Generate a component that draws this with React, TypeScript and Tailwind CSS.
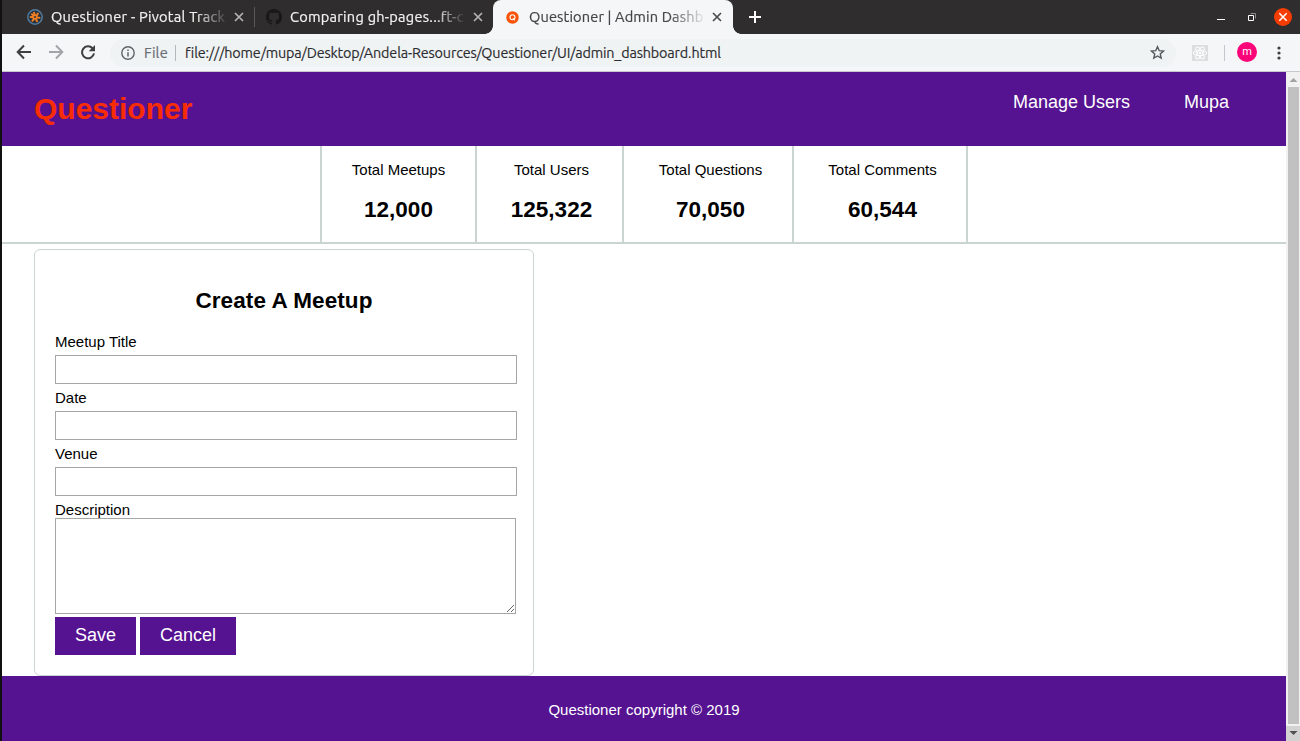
import type { ReactNode } from "react";

const uiFont = "font-['Ubuntu','Noto_Sans',sans-serif]";

function CloseMark({ className }: { className: string }) {
  return (
    <svg className={`h-[10px] w-[10px] shrink-0 ${className}`} viewBox="0 0 10 10" fill="none" stroke="currentColor" strokeWidth="1.7">
      <path d="M1 1l8 8M9 1L1 9" />
    </svg>
  );
}

function PivotalIcon() {
  return (
    <svg className="h-4 w-4 shrink-0" viewBox="0 0 16 16">
      <circle cx="8" cy="8" r="7.2" fill="#26313c" stroke="#517a9e" strokeWidth="1.5" />
      <g stroke="#ee7f22" strokeWidth="2" strokeLinecap="round">
        <path d="M8 6.3L7 3.7M9.5 7.1l1.4-2.5M9.7 8.6l2.8.1M8.6 9.8l1.5 2.4M7 9.6l-1.6 2.2M6.3 8.3l-2.7-.4M6.8 6.9L4.9 5.3" />
      </g>
      <circle cx="8" cy="8" r="2.4" fill="#ee7f22" />
      <circle cx="8" cy="8" r="1" fill="#26313c" />
    </svg>
  );
}

function GithubIcon() {
  return (
    <svg className="h-4 w-4 shrink-0" viewBox="0 0 16 16" fill="#191717">
      <path d="M8 0C3.58 0 0 3.58 0 8c0 3.54 2.29 6.53 5.47 7.59.4.07.55-.17.55-.38 0-.19-.01-.82-.01-1.49-2.01.37-2.53-.49-2.69-.94-.09-.23-.48-.94-.82-1.13-.28-.15-.68-.52-.01-.53.63-.01 1.08.58 1.23.82.72 1.21 1.87.87 2.33.66.07-.52.28-.87.51-1.07-1.78-.2-3.64-.89-3.64-3.95 0-.87.31-1.59.82-2.15-.08-.2-.36-1.02.08-2.12 0 0 .67-.21 2.2.82.64-.18 1.32-.27 2-.27s1.36.09 2 .27c1.53-1.04 2.2-.82 2.2-.82.44 1.1.16 1.92.08 2.12.51.56.82 1.27.82 2.15 0 3.07-1.87 3.75-3.65 3.95.29.25.54.73.54 1.48 0 1.07-.01 1.93-.01 2.2 0 .21.15.46.55.38A8.01 8.01 0 0 0 16 8c0-4.42-3.58-8-8-8z" />
    </svg>
  );
}

function QuestionerIcon() {
  return (
    <svg className="h-[13px] w-[13px] shrink-0" viewBox="0 0 13 13" fill="none">
      <circle cx="6.5" cy="6.5" r="6.2" fill="#fb5208" />
      <circle cx="6.5" cy="6.3" r="2.5" stroke="#fff" strokeWidth="1.1" />
      <path d="M6.8 7.4L8.8 9.4" stroke="#fff" strokeWidth="1.1" />
    </svg>
  );
}

function TabStrip() {
  return (
    <div className="flex h-[34px] bg-[#302d2e]">
      <div className="flex w-[252px] shrink-0 items-center pl-[25px]">
        <PivotalIcon />
        <span className="ml-2 w-[176px] shrink-0 whitespace-nowrap text-[14.6px] tracking-[0.25px] text-[#f2f1f0] [-webkit-text-stroke:0.2px] [mask-image:linear-gradient(to_right,black_145px,transparent_178px)]">
          Questioner - Pivotal Track
        </span>
        <CloseMark className="ml-[7px] text-[#b5b3b3]" />
      </div>
      <div className="flex w-[239px] shrink-0 items-center">
        <div className="h-5 w-px bg-[#5a5758]" />
        <div className="ml-[11px]">
          <GithubIcon />
        </div>
        <span className="ml-2 w-[178px] shrink-0 whitespace-nowrap text-[14.6px] tracking-[0.24px] text-[#f2f1f0] [-webkit-text-stroke:0.2px] [mask-image:linear-gradient(to_right,black_145px,transparent_176px)]">
          Comparing gh-pages...ft-c
        </span>
        <CloseMark className="ml-[5px] text-[#b5b3b3]" />
      </div>
      <div className="relative flex w-[240px] shrink-0 items-center rounded-t-lg bg-[#f5f6f8] pl-[13px]">
        <span className="absolute bottom-0 -left-2 h-2 w-2 bg-[radial-gradient(circle_at_0_0,transparent_7.5px,#f5f6f8_8px)]" />
        <span className="absolute -right-2 bottom-0 h-2 w-2 bg-[radial-gradient(circle_at_100%_0,transparent_7.5px,#f5f6f8_8px)]" />
        <QuestionerIcon />
        <span className="ml-[10px] w-[176px] shrink-0 whitespace-nowrap text-[14.6px] tracking-[0.13px] text-[#454446] [-webkit-text-stroke:0.2px] [mask-image:linear-gradient(to_right,black_140px,transparent_178px)]">
          Questioner | Admin Dashb
        </span>
        <CloseMark className="ml-[7px] text-[#4c4b4d]" />
      </div>
      <svg className="mt-[11px] ml-4 h-3 w-3" viewBox="0 0 12 12" stroke="#fff" strokeWidth="2">
        <path d="M6 0v12M0 6h12" />
      </svg>
      <div className="ml-auto flex items-center pr-2">
        <svg className="h-4 w-10" viewBox="0 0 40 16" fill="none">
          <path d="M0 10.5h8" stroke="#fff" />
          <path d="M33.5 4.5h5v5" stroke="#8d8a8b" />
          <path d="M31.5 6.5h5v5h-5z" stroke="#fff" />
        </svg>
        <svg className="ml-[17px] h-[18px] w-[18px]" viewBox="0 0 18 18">
          <circle cx="9" cy="9" r="9" fill="#f53c02" />
          <path d="M5.3 5.3l7.4 7.4M12.7 5.3l-7.4 7.4" stroke="#fff" strokeWidth="1.5" />
        </svg>
      </div>
    </div>
  );
}

function Toolbar() {
  return (
    <div className="flex h-[38px] items-center border-b border-[#c5c7cb] bg-[#f5f6f8]">
      <svg className="-mt-px ml-[14px] h-4 w-[80px] shrink-0" viewBox="0 0 80 16" fill="none" strokeWidth="2">
        <path d="M15 8H2M8 1.5L1.7 8 8 14.5" stroke="#3f3f42" />
        <path d="M33 8h13M40 1.5L46.3 8 40 14.5" stroke="#a3a4a7" />
        <path d="M76.5 4.2A6 6 0 1 0 78 9.4" stroke="#3f3f42" />
        <path d="M79 1v6.3h-6.3z" fill="#3f3f42" />
      </svg>
      <div className="ml-[14px] flex h-7 w-[1066px] items-center rounded-full bg-[#eff3f4] pr-[11px] pl-[11px]">
        <svg className="h-[14px] w-[14px] shrink-0" viewBox="0 0 14 14" fill="none" stroke="#5f6368">
          <circle cx="7" cy="7" r="6.2" strokeWidth="1.4" />
          <path d="M7 6.2v4.3M7 3.4v1.5" strokeWidth="1.5" />
        </svg>
        <span className="mt-px ml-[9px] w-[24px] text-[14.6px] tracking-[0.2px] text-[#6a6e73] [-webkit-text-stroke:0.2px]">File</span>
        <span className="ml-[7px] h-4 w-px bg-[#b4b7bb]" />
        <span className="mt-[2px] ml-[9px] text-[14.4px] tracking-[-0.17px] whitespace-nowrap text-[#2c2b2e] [-webkit-text-stroke:0.15px]">
          file:///home/mupa/Desktop/Andela-Resources/Questioner/UI/admin_dashboard.html
        </span>
        <svg className="ml-auto h-[15px] w-[15px]" viewBox="0 0 15 15" fill="none" stroke="#55585c" strokeWidth="1.4">
          <path d="M7.5 1.7l1.75 4 4.2.4-3.2 2.85.95 4.2-3.7-2.2-3.7 2.2.95-4.2L1.55 6.1l4.2-.4z" />
        </svg>
      </div>
      <svg className="ml-4 h-4 w-4" viewBox="0 0 16 16" fill="none">
        <path d="M0 0h16v16H0z" fill="#dcddde" />
        <g stroke="#fff">
          <ellipse cx="8" cy="8" rx="6.7" ry="2.6" />
          <ellipse cx="8" cy="8" rx="6.7" ry="2.6" transform="rotate(60 8 8)" />
          <ellipse cx="8" cy="8" rx="6.7" ry="2.6" transform="rotate(120 8 8)" />
        </g>
        <circle cx="8" cy="8" r="1.3" fill="#fff" />
      </svg>
      <span className="ml-4 h-4 w-px bg-[#c3c6cc]" />
      <span className="-mt-px ml-3 flex h-5 w-5 items-center justify-center rounded-full bg-[#fb0679] pb-px font-['Roboto',sans-serif] text-[11px] leading-none text-white">
        m
      </span>
      <svg className="ml-[20px] h-[14px] w-[4px]" viewBox="0 0 4 14" fill="#3f3f42">
        <circle cx="2" cy="2" r="1.6" />
        <circle cx="2" cy="7" r="1.6" />
        <circle cx="2" cy="12" r="1.6" />
      </svg>
    </div>
  );
}

function Stat({ label, value, className }: { label: string; value: string; className: string }) {
  return (
    <div className={`flex shrink-0 flex-col items-center border-r-2 border-[#cad5d2] pt-[15px] ${className}`}>
      <span className="text-[15px] leading-[17px]">{label}</span>
      <strong className="mt-[19px] text-[22.5px] leading-[26px]">{value}</strong>
    </div>
  );
}

function Field({ label }: { label: string }) {
  return (
    <label className="block h-14">
      <span className="block h-[22px] leading-[17px]">{label}</span>
      <input className="block h-[29px] w-[462px] border border-[#a6a6a6] bg-white px-2 outline-none" />
    </label>
  );
}

function Button({ children, className }: { children: ReactNode; className: string }) {
  return <button className={`h-[38px] bg-[#551291] pb-[2px] text-[18px] text-white ${className}`}>{children}</button>;
}

function Scrollbar() {
  return (
    <div className="flex w-[14px] shrink-0 flex-col items-center bg-[#f1f1f1]">
      <svg className="h-[15px] w-[14px]" viewBox="0 0 14 15" fill="#a3a3a3">
        <path d="M3.5 10L7.5 6l4 4z" />
      </svg>
      <div className="ml-[1px] w-[11px] flex-1 bg-[#c1c1c1]" />
      <svg className="mt-[2px] h-[15px] w-[14px] bg-[#d2d2d2]" viewBox="0 0 14 15" fill="#505050">
        <path d="M3.5 5L7.5 9l4-4z" />
      </svg>
    </div>
  );
}

export default function App() {
  return (
    <div className="flex h-[741px] w-[1300px] flex-col overflow-hidden border-l-2 border-[#111] bg-white">
      <div className={uiFont}>
        <TabStrip />
        <Toolbar />
      </div>
      <div className="flex flex-1">
        <div className="flex w-[1284px] shrink-0 flex-col font-['Liberation_Sans',Arial,sans-serif] text-[15px] text-black">
          <header className="flex h-[74px] justify-between bg-[#551291] pr-[57px] pl-8">
            <h1 className="pt-5 text-[30px] leading-[34px] font-bold text-[#f92d05]">Questioner</h1>
            <nav className="flex gap-[54px] pt-5 text-[18px] leading-5 text-white">
              <a>Manage Users</a>
              <a>Mupa</a>
            </nav>
          </header>
          <section className="flex h-[98px] border-b-2 border-[#cad5d2] pl-[318px]">
            <Stat label="Total Meetups" value="12,000" className="w-[157px] border-l-2" />
            <Stat label="Total Users" value="125,322" className="w-[147px] pl-[4px]" />
            <Stat label="Total Questions" value="70,050" className="w-[170px] pl-[5px]" />
            <Stat label="Total Comments" value="60,544" className="w-[174px] pl-[5px]" />
          </section>
          <form className="mt-[5px] ml-8 h-[427px] w-[500px] rounded-md border border-[#cad5d2] px-5 pt-[38px]">
            <h2 className="mb-[19px] h-[26px] text-center text-[22.5px] leading-[26px] font-bold tracking-[0.08px]">Create A Meetup</h2>
            <Field label="Meetup Title" />
            <Field label="Date" />
            <Field label="Venue" />
            <label className="block">
              <span className="block h-[17px] leading-[17px]">Description</span>
              <textarea className="block h-24 w-[461px] resize border border-[#a6a6a6] bg-white outline-none" />
            </label>
            <div className="mt-[3px] flex gap-1">
              <Button className="w-[81px]">Save</Button>
              <Button className="w-24">Cancel</Button>
            </div>
          </form>
          <footer className="flex h-[65px] justify-center bg-[#551291] pt-[25px] leading-[17px] text-white">
            Questioner copyright © 2019
          </footer>
        </div>
        <Scrollbar />
      </div>
    </div>
  );
}
